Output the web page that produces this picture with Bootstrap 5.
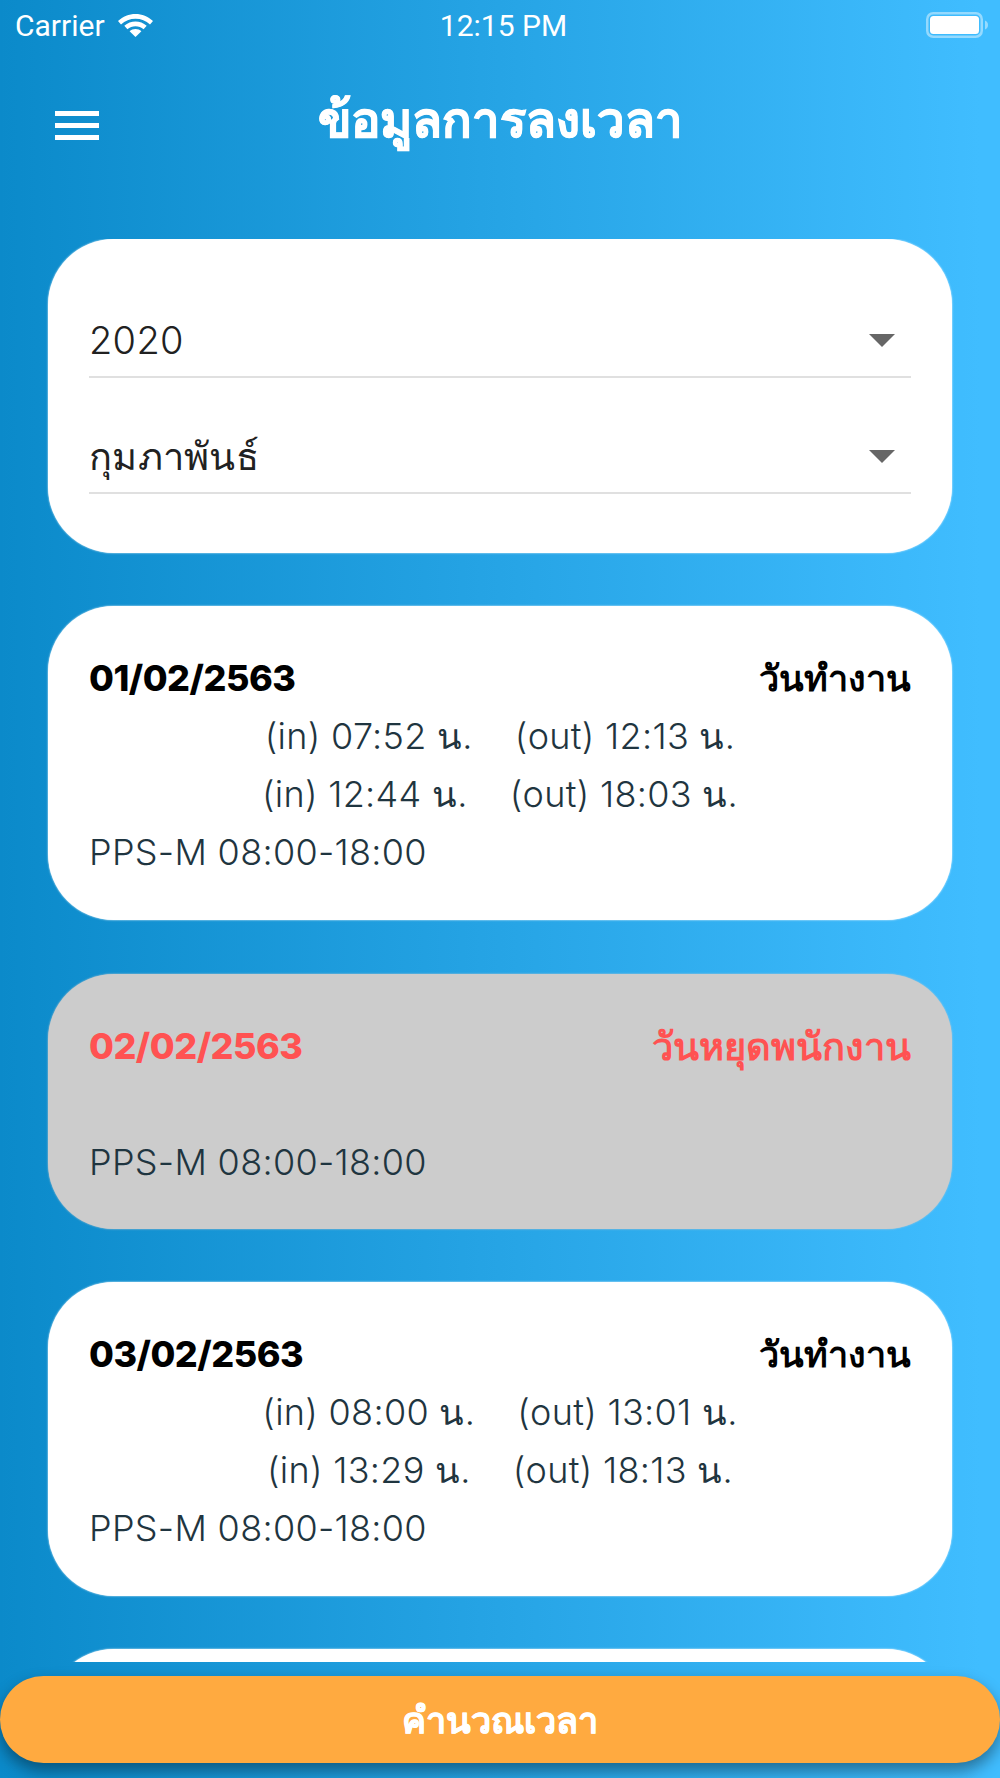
<!DOCTYPE html>
<html lang="th">
<head>
  <meta charset="UTF-8" />
  <meta name="viewport" content="width=device-width, initial-scale=1.0" />
  <title>ข้อมูลการลงเวลา</title>
  <link href="https://cdn.jsdelivr.net/npm/bootstrap@5.3.0/dist/css/bootstrap.min.css" rel="stylesheet">
  <style>
    html, body { height: 100%; }
    body {
      font-family: "Inter", "Noto Sans", sans-serif;
      background: #1a9adb;
      overflow: hidden;
    }
    .app-screen {
      width: 1000px;
      height: 1778px;
      background: linear-gradient(90deg, #0b8aca 0%, #40bdff 98%);
    }
    .status-row {
      height: 50px;
      padding: 0 12px 0 15px;
      color: #fff;
      font-family: "Roboto", sans-serif;
      font-size: 30px;
    }
    .status-side { width: 300px; }
    .status-time { padding-left: 4px; }
    .wifi-icon { margin-left: 5px; }
    .title-row {
      height: 189px;
      padding: 45px 55px 0;
    }
    .burger { width: 44px; margin-top: 16px; }
    .burger i { display: block; height: 5px; background: #fff; margin-bottom: 7px; }
    .page-title {
      font-size: 49px;
      font-weight: 900;
      color: #fff;
      -webkit-text-stroke: .8px #fff;
      line-height: 50px;
      width: 500px;
      margin: 0 0 0 151px;
      text-align: center;
    }
    .time-list {
      height: 1423px;
      padding: 0 48px;
      overflow: hidden;
    }
    .time-card {
      border-radius: 66px;
      background: #fff;
      padding: 43px 41px 0;
      margin-bottom: 53.33px;
      box-shadow: 0 0 2px #fff;
      color: #1f3540;
      font-size: 36px;
      font-weight: 350;
      letter-spacing: .3px;
    }
    .time-card.off-day { background: #cccccc; box-shadow: 0 0 2px #ccc; height: 255px; }
    .time-card.work-day { height: 314px; }
    .pick-card { height: 314px; padding-top: 23px; }
    .pick-row {
      height: 116px;
      padding-top: 41px;
      border-bottom: 2px solid #e0e0e0;
      color: #212121;
      font-size: 38px;
      line-height: 50px;
    }
    .pick-arrow {
      width: 0;
      height: 0;
      border-left: 13px solid transparent;
      border-right: 13px solid transparent;
      border-top: 13px solid #666;
      margin: 2px 16px 0 0;
    }
    .line-head { height: 58px; line-height: 58px; font-weight: 800; color: #000; font-size: 36px; letter-spacing: 0; }
    .line-head span:first-child { letter-spacing: -.5px; }
    .off-day .line-head { color: #ff5252; }
    .off-day .line-head span:last-child { font-size: 38px; }
    .line-row { height: 58px; line-height: 58px; }
    .line-row span + span { margin-left: 42px; }
    .calc-wrap { padding: 14px 0 15px; }
    .calc-btn {
      display: block;
      width: 100%;
      height: 87px;
      border: 0;
      border-radius: 44px;
      background: #ffaa40;
      color: #fff;
      font-size: 36px;
      font-weight: 800;
      -webkit-text-stroke: .5px #fff;
      box-shadow: 0 8px 16px rgba(0,0,0,.4);
    }
  </style>
</head>
<body>
  <div class="app-screen d-flex flex-column">
    <div class="status-row d-flex justify-content-between align-items-center">
      <div class="status-side d-flex align-items-center gap-2">
        <span>Carrier</span>
        <svg class="wifi-icon" width="35" height="23" viewBox="0 0 35 23" fill="#fff"><path d="M17.500 0C24 0 30 2.500 35 7L32 10.500C28 6.800 23 4.800 17.500 4.800C12 4.800 7 6.800 3 10.500L0 7C5 2.500 11 0 17.500 0z"/><path d="M17.500 7.500C21.500 7.500 25.500 9 28.700 11.700L25.600 15.200C23.300 13.200 20.500 12.200 17.500 12.200C14.500 12.200 11.700 13.200 9.400 15.200L6.300 11.700C9.500 9 13.500 7.500 17.500 7.500z"/><path d="M17.500 15C19.700 15 21.800 15.800 23.400 17.200L17.500 23L11.600 17.200C13.200 15.800 15.300 15 17.500 15z"/></svg>
      </div>
      <div class="status-time">12:15 PM</div>
      <div class="status-side d-flex justify-content-end">
        <svg width="62" height="26" viewBox="0 0 62 26"><rect x="1.250" y="1.250" width="54.500" height="23.500" rx="6" fill="none" stroke="#fff" stroke-opacity=".45" stroke-width="2.500"/><rect x="4" y="4" width="49" height="18" rx="3.500" fill="#fff"/><path d="M59 8.500c2 .6 3 2.400 3 4.500s-1 3.900-3 4.500z" fill="#fff" fill-opacity=".45"/></svg>
      </div>
    </div>

    <div class="title-row d-flex align-items-start">
      <div class="burger"><i></i><i></i><i></i></div>
      <h1 class="page-title">ข้อมูลการลงเวลา</h1>
    </div>

    <div class="time-list">
      <div class="time-card pick-card">
        <div class="pick-row d-flex justify-content-between align-items-center"><span>2020</span><span class="pick-arrow"></span></div>
        <div class="pick-row d-flex justify-content-between align-items-center"><span>กุมภาพันธ์</span><span class="pick-arrow"></span></div>
      </div>

      <div class="time-card work-day">
        <div class="line-head d-flex justify-content-between"><span>01/02/2563</span><span>วันทำงาน</span></div>
        <div class="line-row text-center"><span>(in) 07:52 น.</span><span>(out) 12:13 น.</span></div>
        <div class="line-row text-center"><span>(in) 12:44 น.</span><span>(out) 18:03 น.</span></div>
        <div class="line-row">PPS-M 08:00-18:00</div>
      </div>

      <div class="time-card off-day">
        <div class="line-head d-flex justify-content-between"><span>02/02/2563</span><span>วันหยุดพนักงาน</span></div>
        <div class="line-row"></div>
        <div class="line-row">PPS-M 08:00-18:00</div>
      </div>

      <div class="time-card work-day">
        <div class="line-head d-flex justify-content-between"><span>03/02/2563</span><span>วันทำงาน</span></div>
        <div class="line-row text-center"><span>(in) 08:00 น.</span><span>(out) 13:01 น.</span></div>
        <div class="line-row text-center"><span>(in) 13:29 น.</span><span>(out) 18:13 น.</span></div>
        <div class="line-row">PPS-M 08:00-18:00</div>
      </div>

      <div class="time-card work-day"></div>
    </div>

    <div class="calc-wrap">
      <button type="button" class="calc-btn">คำนวณเวลา</button>
    </div>
  </div>
  <script src="https://cdn.jsdelivr.net/npm/bootstrap@5.3.0/dist/js/bootstrap.bundle.min.js"></script>
</body>
</html>
